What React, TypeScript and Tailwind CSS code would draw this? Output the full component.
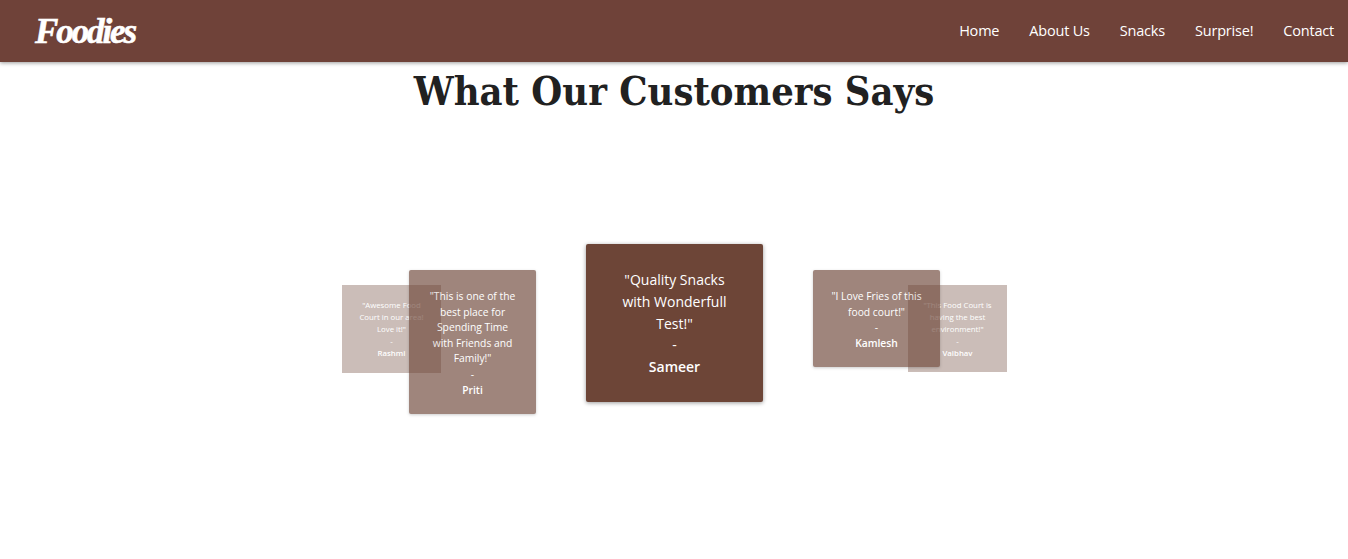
const sans = "font-['Open_Sans','Noto_Sans',sans-serif]";

const links = ["Home", "About Us", "Snacks", "Surprise!", "Contact"];

const App = () => {
  return (
    <div className={`min-h-[559px] bg-white ${sans}`}>
      <nav className="flex h-[62px] items-center justify-between bg-[#6f4239] pl-[35px] pr-[14px] shadow-[0_1px_4px_rgba(0,0,0,0.4)]">
        <span className="font-['Liberation_Serif',serif] text-[35px] font-bold italic leading-none tracking-[-2.1px] text-white [-webkit-text-stroke:0.6px_white]">
          Foodies
        </span>
        <div className="flex gap-[30px] text-[14.5px] tracking-[-0.2px] text-white">
          {links.map((link) => (
            <a key={link}>{link}</a>
          ))}
        </div>
      </nav>

      <h1 className="mt-[2px] text-center font-['DejaVu_Serif_Condensed','DejaVu_Serif',serif] text-[39.5px] font-bold leading-[54px] text-[#212121]">
        What Our Customers Says
      </h1>

      <div className="mt-[126px] flex items-start pl-[342px]">
        <div className="mt-[41px] flex h-[88px] w-[99px] flex-col items-center bg-[#6d4537] px-3 pt-[14px] text-center text-[7.8px] leading-[12px] text-white opacity-35">
          <p>"Awesome Food Court in our area! Love it!"</p>
          <p>-</p>
          <p className="font-semibold">Rashmi</p>
        </div>
        <div className="ml-[-32px] mt-[26px] flex h-[144px] w-[127px] flex-col items-center rounded-[2px] bg-[#6d4537] px-5 pt-[19px] text-center text-[10.3px] leading-[15.6px] text-white opacity-65 shadow-[0_1px_3px_rgba(0,0,0,0.3)]">
          <p>"This is one of the best place for Spending Time with Friends and Family!"</p>
          <p>-</p>
          <p className="font-semibold">Priti</p>
        </div>
        <div className="ml-[50px] flex h-[158px] w-[177px] flex-col items-center rounded-[2px] bg-[#6d4537] px-6 pt-[25px] text-center text-[14px] leading-[21.8px] text-white shadow-[0_1px_4px_rgba(0,0,0,0.4)]">
          <p>"Quality Snacks with Wonderfull Test!"</p>
          <p>-</p>
          <p className="font-semibold">Sameer</p>
        </div>
        <div className="z-10 ml-[50px] mt-[26px] flex h-[97px] w-[127px] flex-col items-center rounded-[2px] bg-[#6d4537] px-3 pt-[19px] text-center text-[10.3px] leading-[15.6px] text-white opacity-65 shadow-[0_1px_3px_rgba(0,0,0,0.3)]">
          <p>"I Love Fries of this food court!"</p>
          <p>-</p>
          <p className="font-semibold">Kamlesh</p>
        </div>
        <div className="ml-[-32px] mt-[41px] flex h-[87px] w-[99px] flex-col items-center bg-[#6d4537] px-3 pt-[14px] text-center text-[7.8px] leading-[12px] text-white opacity-35">
          <p>"This Food Court is having the best environment!"</p>
          <p>-</p>
          <p className="font-semibold">Vaibhav</p>
        </div>
      </div>
    </div>
  );
};

export default App;
